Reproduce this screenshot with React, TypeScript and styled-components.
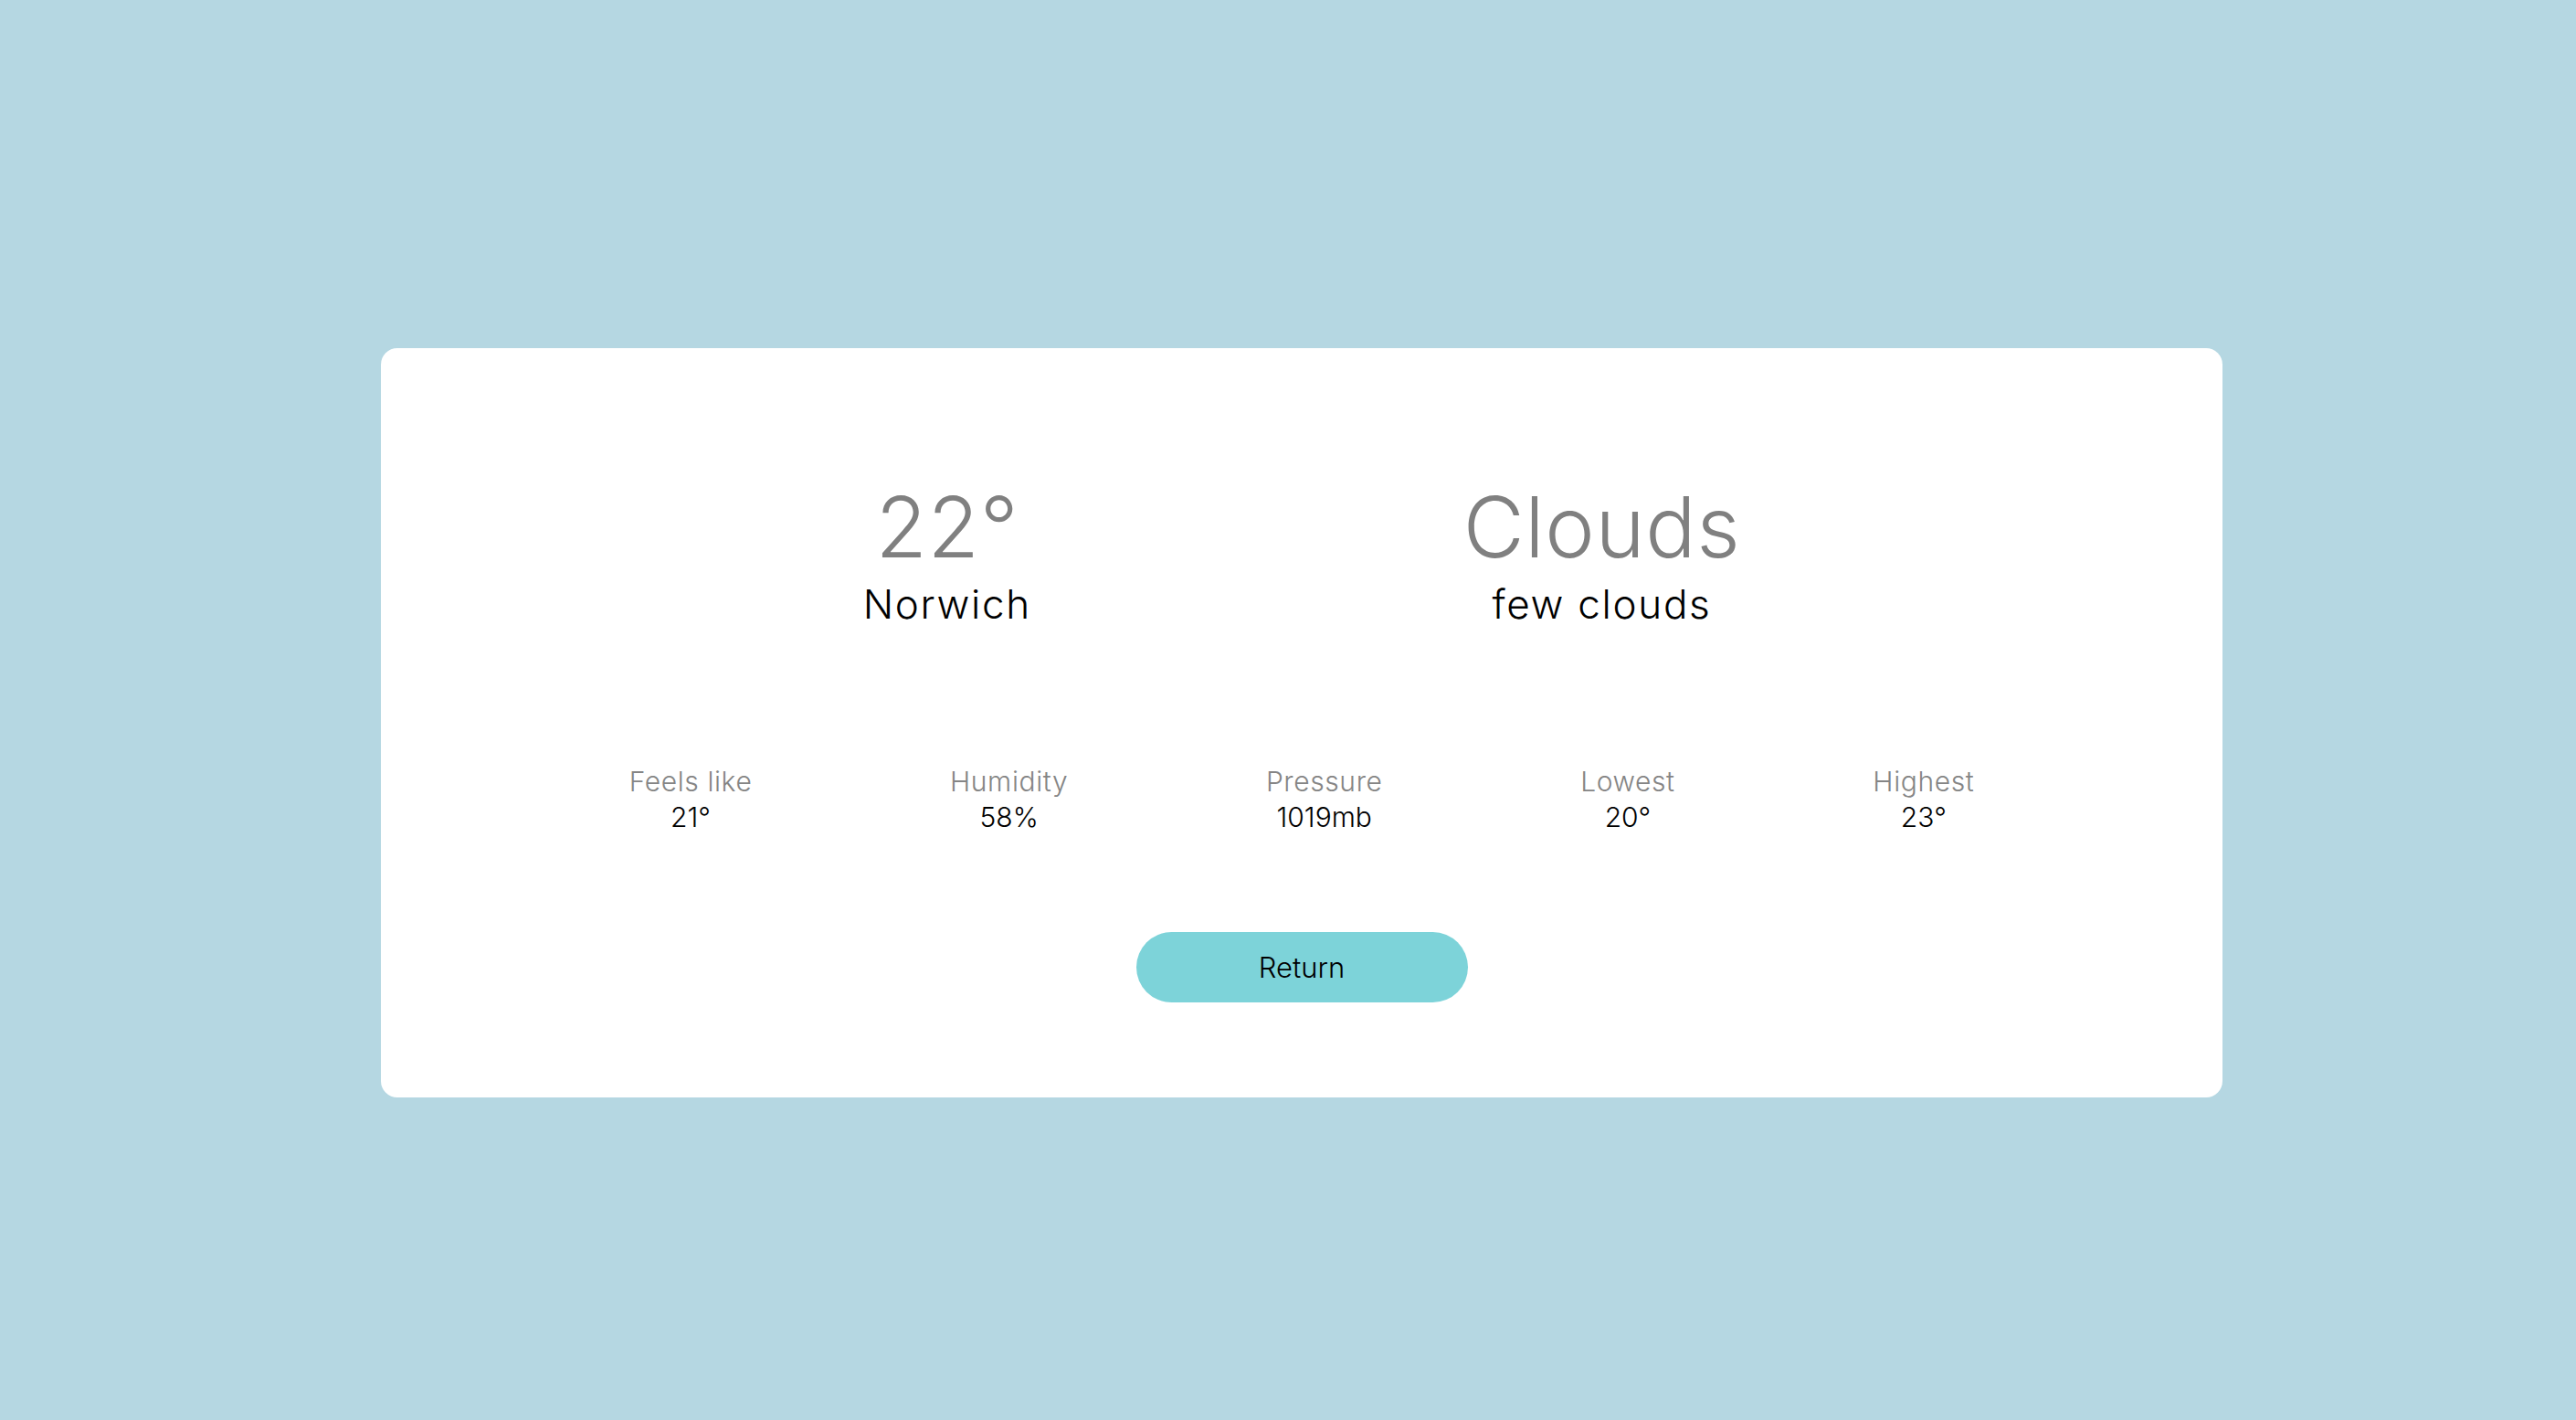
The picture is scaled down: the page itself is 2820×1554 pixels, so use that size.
import React from "react";
import styled, { createGlobalStyle } from "styled-components";

const GlobalStyle = createGlobalStyle`
  html, body {
    margin: 0;
    padding: 0;
    background: #b5d7e2;
    font-family: Inter, "Liberation Sans", sans-serif;
  }
`;

const Page = styled.main`
  min-height: 100vh;
  box-sizing: border-box;
  padding: 28px 0 0 30px;
  display: flex;
  align-items: center;
  justify-content: center;
`;

const Card = styled.section`
  width: 2016px;
  box-sizing: border-box;
  background: #ffffff;
  border-radius: 18px;
  padding: 141px 55px 104px;
  display: flex;
  flex-direction: column;
  align-items: stretch;
`;

const TopRow = styled.div`
  display: flex;
  justify-content: space-evenly;
  align-items: flex-start;
`;

const Block = styled.div`
  display: flex;
  flex-direction: column;
  align-items: center;
`;

const Big = styled.div`
  font-size: 92px;
  font-weight: 300;
  line-height: 110px;
  color: #808080;
  letter-spacing: 0.6px;
`;

const Sub = styled.div`
  margin-top: 3px;
  font-size: 44px;
  font-weight: 350;
  line-height: 53px;
  color: #000;
  letter-spacing: 1.7px;
`;

const StatsRow = styled.div`
  margin-top: 148px;
  display: flex;
  justify-content: space-evenly;
  align-items: flex-start;
`;

const Stat = styled.div`
  display: flex;
  flex-direction: column;
  align-items: center;
`;

const Label = styled.div`
  font-size: 30px;
  font-weight: 300;
  line-height: 39px;
  color: #858585;
  letter-spacing: 0.6px;
`;

const Value = styled.div`
  font-size: 30px;
  font-weight: 350;
  line-height: 39px;
  color: #000;
`;

const ButtonRow = styled.div`
  margin-top: 106px;
  display: flex;
  justify-content: center;
`;

const ReturnButton = styled.button`
  width: 363px;
  height: 77px;
  border: none;
  border-radius: 39px;
  background: #7dd3d9;
  color: #000;
  font-family: Inter, "Liberation Sans", sans-serif;
  font-size: 31px;
  font-weight: 350;
  cursor: pointer;
`;

const stats = [
  { label: "Feels like", value: "21°" },
  { label: "Humidity", value: "58%" },
  { label: "Pressure", value: "1019mb" },
  { label: "Lowest", value: "20°" },
  { label: "Highest", value: "23°" },
];

export default function App() {
  return (
    <>
      <GlobalStyle />
      <Page>
        <Card>
          <TopRow>
            <Block>
              <Big>22°</Big>
              <Sub>Norwich</Sub>
            </Block>
            <Block>
              <Big>Clouds</Big>
              <Sub>few clouds</Sub>
            </Block>
          </TopRow>
          <StatsRow>
            {stats.map((s) => (
              <Stat key={s.label}>
                <Label>{s.label}</Label>
                <Value>{s.value}</Value>
              </Stat>
            ))}
          </StatsRow>
          <ButtonRow>
            <ReturnButton>Return</ReturnButton>
          </ButtonRow>
        </Card>
      </Page>
    </>
  );
}
